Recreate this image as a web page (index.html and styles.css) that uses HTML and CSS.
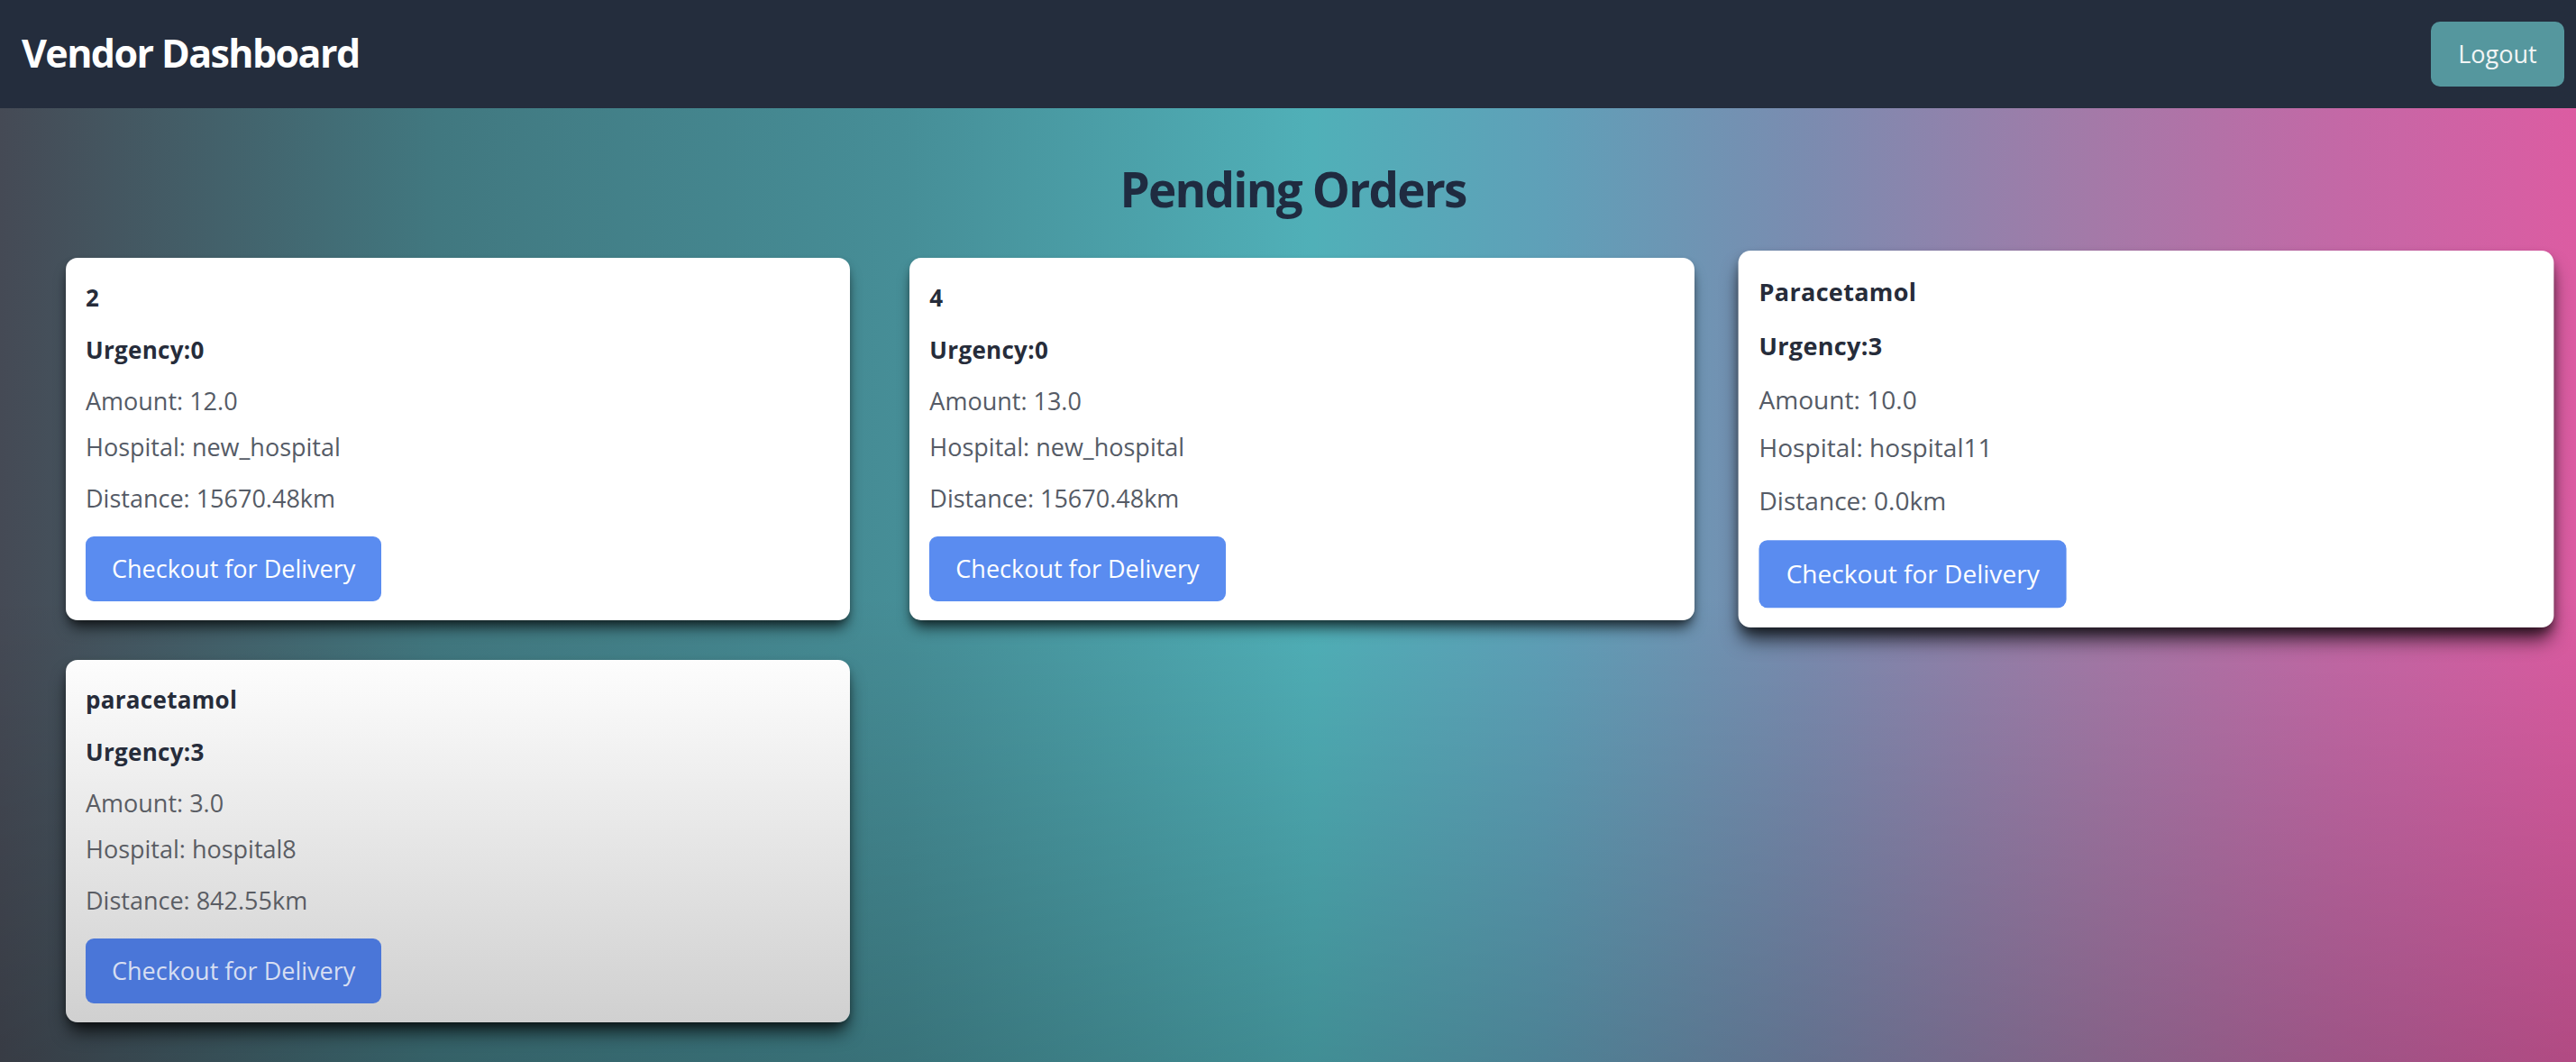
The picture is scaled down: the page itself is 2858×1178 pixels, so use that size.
FILE: index.html
```html
<!DOCTYPE html>
<html lang="en">
<head>
<meta charset="utf-8">
<title>Vendor Dashboard</title>
<link rel="stylesheet" href="styles.css">
</head>
<body>
<header class="topbar">
  <h1 class="brand">Vendor Dashboard</h1>
  <button class="logout">Logout</button>
</header>
<main class="content">
  <h2 class="page-title">Pending Orders</h2>
  <div class="orders">
    <div class="card">
      <p class="name">2</p>
      <p class="urgency">Urgency:0</p>
      <p class="info amount">Amount: 12.0</p>
      <p class="info hospital">Hospital: new_hospital</p>
      <p class="info distance">Distance: 15670.48km</p>
      <button class="checkout">Checkout for Delivery</button>
    </div>
    <div class="card">
      <p class="name">4</p>
      <p class="urgency">Urgency:0</p>
      <p class="info amount">Amount: 13.0</p>
      <p class="info hospital">Hospital: new_hospital</p>
      <p class="info distance">Distance: 15670.48km</p>
      <button class="checkout">Checkout for Delivery</button>
    </div>
    <div class="card card-raised">
      <p class="name">Paracetamol</p>
      <p class="urgency">Urgency:3</p>
      <p class="info amount">Amount: 10.0</p>
      <p class="info hospital">Hospital: hospital11</p>
      <p class="info distance">Distance: 0.0km</p>
      <button class="checkout">Checkout for Delivery</button>
    </div>
    <div class="card card-hover">
      <p class="name">paracetamol</p>
      <p class="urgency">Urgency:3</p>
      <p class="info amount">Amount: 3.0</p>
      <p class="info hospital">Hospital: hospital8</p>
      <p class="info distance">Distance: 842.55km</p>
      <button class="checkout">Checkout for Delivery</button>
    </div>
  </div>
</main>
</body>
</html>
```
FILE: styles.css
```css
* { box-sizing: border-box; }

html, body {
  margin: 0;
  padding: 0;
}

body {
  font-family: "Open Sans", "Noto Sans", sans-serif;
  background: #242d3d;
  min-height: 100vh;
}

.topbar {
  height: 120px;
  background: #242d3d;
  display: flex;
  justify-content: space-between;
  align-items: center;
  padding: 0 13px 10px 24px;
}

.brand {
  margin: 0;
  color: #ffffff;
  font-size: 43px;
  font-weight: 700;
  letter-spacing: -1.6px;
  line-height: 1.2;
  padding-top: 8px;
}

.logout {
  width: 148px;
  height: 72px;
  border: none;
  border-radius: 10px;
  background: #55979e;
  color: #f2f5f5;
  font-family: inherit;
  font-size: 27px;
  line-height: 72px;
  padding: 0;
  margin-top: 10px;
}

.content {
  min-height: calc(100vh - 120px);
  padding: 0 42px 60px 73px;
  background:
    linear-gradient(to bottom, rgba(0,0,0,0) 0%, rgba(0,0,0,0) 50%, rgba(0,0,0,0.2) 100%),
    linear-gradient(to right, #454a55 0%, #417880 17%, #468e97 35%, #50b0b8 51%, #5fa0b8 60%, #7a8cb0 70%, #a37aa8 81%, #c468a6 91%, #dc5ca2 100%);
}

.page-title {
  margin: 0;
  padding: 58px 20px 0 0;
  text-align: center;
  color: #1f2b40;
  font-size: 53px;
  font-weight: 700;
  letter-spacing: -1.8px;
  line-height: 64px;
}

.orders {
  margin-top: 44px;
  display: grid;
  grid-template-columns: repeat(3, 1fr);
  column-gap: 66px;
  row-gap: 44px;
  align-items: start;
}

.card {
  background: #ffffff;
  border-radius: 13px;
  padding: 26px 22px 21px 22px;
  box-shadow: 0 12px 16px -4px rgba(0,0,0,0.65), 0 4px 8px -2px rgba(0,0,0,0.35);
}

.card p {
  margin: 0;
}

.name, .urgency {
  font-size: 26px;
  font-weight: 700;
  letter-spacing: 0.3px;
  line-height: 36px;
  color: #262c3a;
}

.name { margin-bottom: 22px !important; }
.urgency { margin-bottom: 19px !important; }

.info {
  font-size: 27px;
  line-height: 40px;
  color: #555b66;
}

.amount { margin-bottom: 11px !important; }
.hospital { margin-bottom: 17px !important; }
.distance { margin-bottom: 22px !important; }

.checkout {
  display: inline-block;
  height: 72px;
  padding: 0 29px;
  border: none;
  border-radius: 9px;
  background: #5a8cf0;
  color: #ffffff;
  font-family: inherit;
  font-size: 27px;
  line-height: 72px;
}

.card-raised {
  transform: scale(1.04);
  box-shadow: 0 16px 20px -4px rgba(0,0,0,0.7), 0 6px 10px -2px rgba(0,0,0,0.4);
}

.card-hover {
  background: linear-gradient(to bottom, #fdfdfd 0%, #e6e6e6 50%, #d0d0d0 100%);
  box-shadow: 0 14px 20px -4px rgba(0,0,0,0.75), 0 4px 8px -2px rgba(0,0,0,0.4);
}

.card-hover .info {
  color: #5a5d64;
}

.card-hover .checkout {
  background: #4a76d8;
  color: #d6def2;
}
```
